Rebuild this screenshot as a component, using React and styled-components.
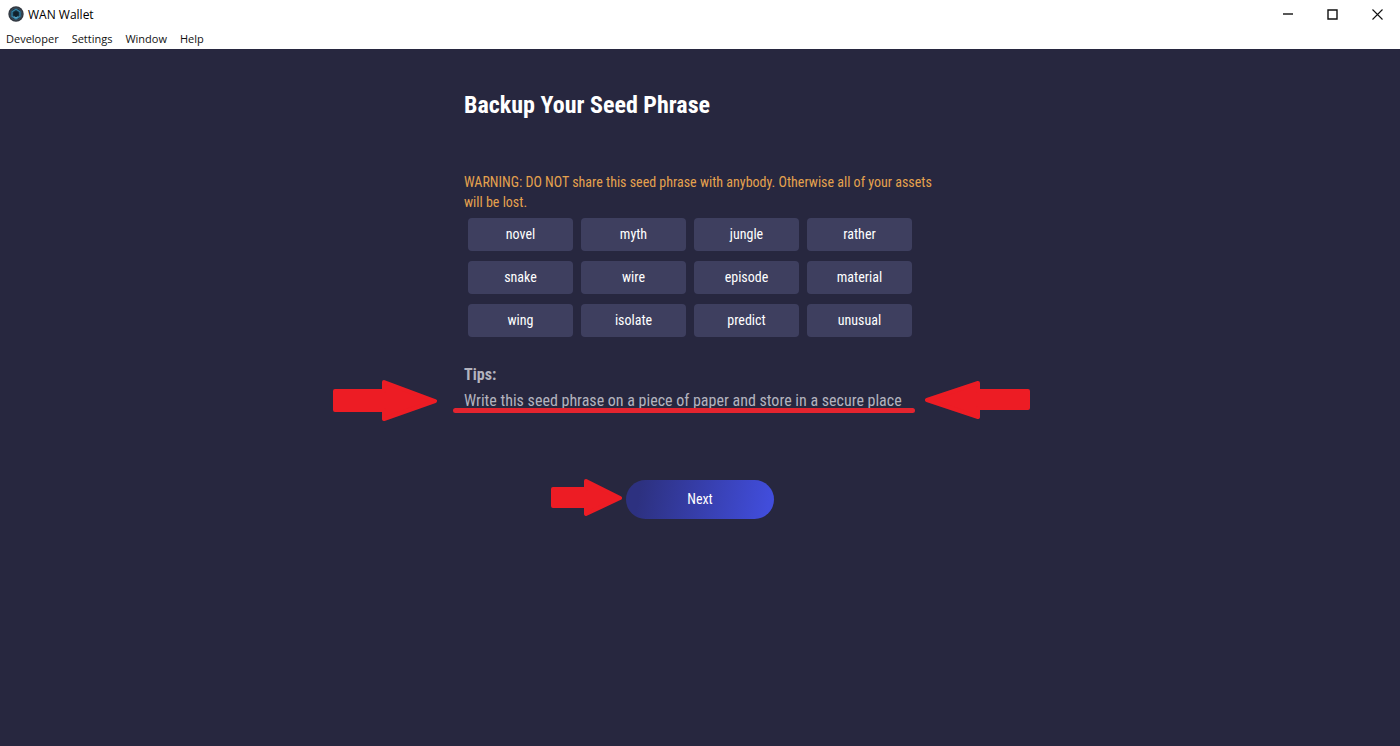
import styled, { createGlobalStyle } from 'styled-components';

const GlobalStyle = createGlobalStyle`
  * {
    box-sizing: border-box;
  }

  body {
    margin: 0;
    background-color: #27273f;
    font-family: 'Roboto Condensed', 'Liberation Sans Narrow', Roboto, sans-serif;
  }
`;

const Window = styled.div`
  min-height: 100vh;
  display: flex;
  flex-direction: column;
`;

const TitleBar = styled.header`
  display: flex;
  align-items: center;
  height: 28px;
  padding-left: 8px;
  background-color: #fff;
  color: #000;
  font-family: 'Open Sans', sans-serif;
  font-size: 12px;
`;

const AppName = styled.span`
  flex: 1;
  margin-left: 4px;
`;

const WindowButton = styled.button`
  display: flex;
  align-items: center;
  justify-content: center;
  width: 45px;
  height: 28px;
  padding: 0;
  border: none;
  background: none;
`;

const MenuBar = styled.nav`
  display: flex;
  gap: 13px;
  height: 21px;
  padding: 0 6px;
  background-color: #fff;
`;

const MenuItem = styled.button`
  padding: 0;
  border: none;
  background: none;
  color: #111;
  font-family: 'Open Sans', sans-serif;
  font-size: 11px;
  line-height: 22px;
`;

const Content = styled.main`
  flex: 1;
  width: 100%;
  max-width: 472px;
  margin: 0 auto;
  padding-top: 40px;
`;

const Title = styled.h1`
  margin: 0 0 51px;
  color: #fff;
  font-size: 24px;
  font-weight: 700;
  line-height: 32px;
`;

const Warning = styled.p`
  margin: 0 0 6px;
  color: #e5a24e;
  font-size: 14px;
  line-height: 20px;
`;

const WordGrid = styled.ul`
  display: grid;
  grid-template-columns: repeat(4, 105px);
  gap: 10px 8px;
  margin: 0;
  padding: 0 4px;
  list-style: none;
`;

const Word = styled.li`
  height: 33px;
  border-radius: 4px;
  background-color: #3e3f5f;
  color: #fff;
  font-size: 14px;
  line-height: 32px;
  text-align: center;
`;

const TipsTitle = styled.h2`
  margin: 25px 0 0;
  color: #b3b3be;
  font-size: 16px;
  font-weight: 700;
  line-height: 26px;
`;

const Tip = styled.p`
  position: relative;
  margin: 0;
  color: #b3b3be;
  font-size: 16px;
  line-height: 26px;
`;

const Underline = styled.span`
  position: absolute;
  top: 20px;
  left: -11px;
  width: 462px;
  height: 5px;
  border-radius: 3px;
  background-color: #e3242f;
`;

const Arrow = styled.svg`
  position: absolute;
  top: ${({ $top }) => $top}px;
  left: ${({ $left }) => $left}px;
  fill: #ed1c24;
  stroke: #ed1c24;
  stroke-width: 4;
  stroke-linejoin: round;
`;

const Actions = styled.div`
  position: relative;
  display: flex;
  justify-content: center;
  margin-top: 66px;
`;

const NextButton = styled.button`
  width: 148px;
  height: 39px;
  padding: 0 0 2px;
  border: none;
  border-radius: 20px;
  background: linear-gradient(100deg, #2d3180 10%, #414ddb 95%);
  color: #fff;
  font-family: inherit;
  font-size: 14px;
`;

const menuItems = ['Developer', 'Settings', 'Window', 'Help'];

const words = [
  'novel', 'myth', 'jungle', 'rather',
  'snake', 'wire', 'episode', 'material',
  'wing', 'isolate', 'predict', 'unusual',
];

const Logo = () => (
  <svg width="16" height="16" viewBox="0 0 16 16" aria-hidden="true">
    <circle cx="8" cy="8" r="7.7" fill="#30363f" />
    <circle cx="8" cy="8" r="6" fill="#183544" stroke="#46535f" strokeWidth="0.8" />
    <path d="M4 5.8 8 3.2l4 2.6v4.6L8 13l-4-2.6z" fill="none" stroke="#3583a8" strokeWidth="1.3" />
    <path d="M5.6 6.7 8 5.2l2.4 1.5v2.6L8 10.6 5.6 9.3z" fill="#10212d" />
    <path d="M5.8 10.6 8 12l2.2-1.4" fill="none" stroke="#68b7d8" strokeWidth="1" />
  </svg>
);

const App = () => {
  return (
    <Window>
      <GlobalStyle />
      <TitleBar>
        <Logo />
        <AppName>WAN Wallet</AppName>
        <WindowButton aria-label="Minimize">
          <svg width="10" height="10" viewBox="0 0 10 10" stroke="#111">
            <path d="M0 5h10" strokeWidth="1.4" />
          </svg>
        </WindowButton>
        <WindowButton aria-label="Maximize">
          <svg width="11" height="11" viewBox="0 0 11 11" fill="none" stroke="#111">
            <path d="M1 1h9v9H1z" strokeWidth="1.4" />
          </svg>
        </WindowButton>
        <WindowButton aria-label="Close">
          <svg width="11" height="11" viewBox="0 0 11 11" stroke="#111">
            <path d="M0.5 0.5l10 10M10.5 0.5l-10 10" strokeWidth="1.1" />
          </svg>
        </WindowButton>
      </TitleBar>
      <MenuBar>
        {menuItems.map((item) => (
          <MenuItem key={item}>{item}</MenuItem>
        ))}
      </MenuBar>

      <Content>
        <Title>Backup Your Seed Phrase</Title>
        <Warning>
          WARNING: DO NOT share this seed phrase with anybody. Otherwise all of your assets will be lost.
        </Warning>
        <WordGrid>
          {words.map((word) => (
            <Word key={word}>{word}</Word>
          ))}
        </WordGrid>

        <TipsTitle>Tips:</TipsTitle>
        <Tip>
          Write this seed phrase on a piece of paper and store in a secure place
          <Underline />
          <Arrow $top={-9} $left={-131} width="104" height="43" viewBox="0 0 104 43" aria-hidden="true">
            <path d="M2 12h49V3l51 19-51 18V31H2z" />
          </Arrow>
          <Arrow $top={-9} $left={460} width="106" height="41" viewBox="0 0 106 41" aria-hidden="true">
            <path d="M104 12H54V4L3 21l51 17V29h50z" />
          </Arrow>
        </Tip>

        <Actions>
          <Arrow $top={-2} $left={86} width="73" height="39" viewBox="0 0 73 39" aria-hidden="true">
            <path d="M3 11h33V3l34 17-34 16V28H3z" />
          </Arrow>
          <NextButton>Next</NextButton>
        </Actions>
      </Content>
    </Window>
  );
};

export default App;
